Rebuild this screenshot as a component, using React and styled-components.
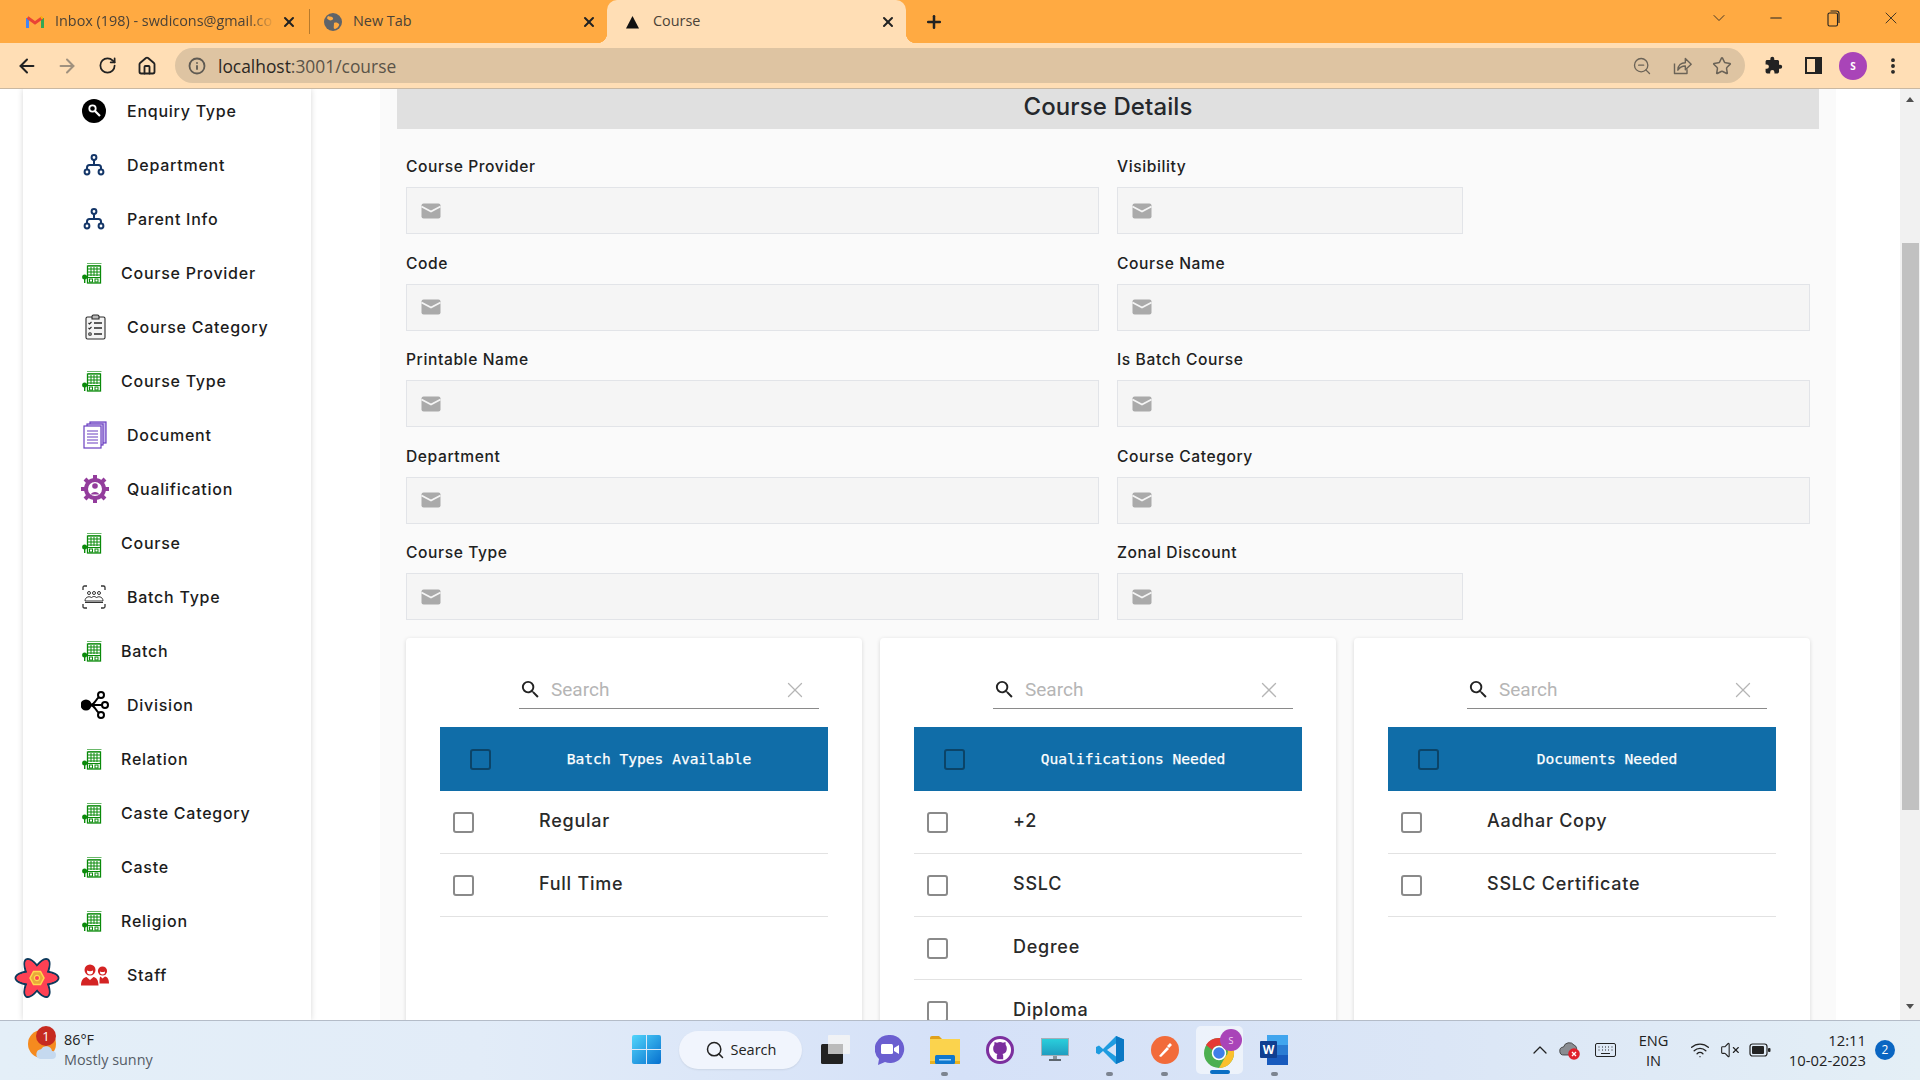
import React from 'react';
import styled, { createGlobalStyle } from 'styled-components';
import { X, ArrowLeft, ArrowRight, RotateCw, Home, Info, ZoomOut, Star, Plus, ChevronDown, ChevronUp, Minus, MoreVertical, Search, Wifi, VolumeX } from 'lucide-react';
import { MdSearch } from 'react-icons/md';

const GlobalStyle = createGlobalStyle`
  html, body { margin: 0; height: 100%; overflow: hidden; }
  body { font-family: "Inter", "Liberation Sans", sans-serif; background: #fff; }
  * { box-sizing: border-box; }
`;

const Page = styled.div`
  width: 1920px;
  height: 1080px;
  display: flex;
  flex-direction: column;
  position: relative;
  overflow: hidden;
`;

/* browser chrome */
const TabBar = styled.div`
  height: 43px;
  flex: none;
  display: flex;
  padding-left: 16px;
  background: #ffaa42;
`;
const Tab = styled.div`
  position: relative;
  width: ${p => p.$w}px;
  height: 43px;
  flex: none;
  display: flex;
  align-items: center;
  padding-left: ${p => p.$pad}px;
  padding-right: 10px;
  font: 14px "Open Sans", sans-serif;
  color: #4a4238;
  border-radius: 10px 10px 0 0;
  background: ${p => (p.$active ? '#ffdeb5' : 'transparent')};
  ${p => p.$active && `
    &::before, &::after {
      content: "";
      position: absolute;
      bottom: 0;
      width: 10px;
      height: 10px;
    }
    &::before { left: -10px; background: radial-gradient(circle at 0 0, transparent 10px, #ffdeb5 10.5px); }
    &::after { right: -10px; background: radial-gradient(circle at 100% 0, transparent 10px, #ffdeb5 10.5px); }
  `}
`;
const TabTitle = styled.span`
  flex: 1;
  margin-left: ${p => p.$gap}px;
  margin-bottom: 2px;
  white-space: nowrap;
  font-size: 14.4px;
  ${p => p.$fade && `
    -webkit-mask-image: linear-gradient(to right, #000 88%, transparent 100%);
    mask-image: linear-gradient(to right, #000 88%, transparent 100%);
  `}
`;
const TabSep = styled.div`
  width: 1px;
  height: 25px;
  margin: 9px 0 0 5px;
  background: #b77a2c;
`;
const NewTabBtn = styled.div`
  margin: 12px 0 0 18px;
  height: 20px;
  color: #222;
`;
const WinControls = styled.div`
  margin-left: auto;
  display: flex;
  align-items: flex-start;
`;
const WinBtn = styled.div`
  width: 57.5px;
  height: 36px;
  display: flex;
  align-items: center;
  justify-content: center;
  color: #222;
`;
const ToolBar = styled.div`
  height: 46px;
  flex: none;
  display: flex;
  padding: 5px 7px 0;
  background: #ffdeb5;
  border-bottom: 1px solid #c9b8a2;
`;
const ToolBtn = styled.div`
  width: 40px;
  height: 35px;
  flex: none;
  display: flex;
  align-items: center;
  justify-content: center;
  color: ${p => p.$color || '#222'};
`;
const Omnibox = styled.div`
  flex: 1;
  height: 35px;
  margin: 0 8px;
  padding: 0 13px;
  display: flex;
  align-items: center;
  border-radius: 18px;
  background: #dec4a2;
  color: #5f5a52;
`;
const Url = styled.span`
  margin-left: 12px;
  font: 17.4px "Open Sans", sans-serif;
  color: #5a5348;
  b { font-weight: 400; color: #2b2722; }
`;
const OmniTools = styled.div`
  margin-left: auto;
  display: flex;
  gap: 20px;
  color: #6b6357;
`;
const Avatar = styled.div`
  width: 28px;
  height: 28px;
  border-radius: 50%;
  background: #a944b8;
  color: #fff;
  font: 700 10px "Open Sans", sans-serif;
  display: flex;
  align-items: center;
  justify-content: center;
`;

/* page body */
const Body = styled.div`
  flex: 1;
  min-height: 0;
  display: flex;
  overflow: hidden;
`;
const Sidebar = styled.nav`
  width: 288px;
  flex: none;
  margin-left: 23px;
  background: #fff;
  box-shadow: 0 0 6px rgba(0, 0, 0, 0.16);
  overflow: hidden;
`;
const SideList = styled.div`
  margin-top: -5px;
`;
const SideItem = styled.div`
  height: 54px;
  display: flex;
  align-items: center;
  padding-left: 59px;
`;
const SideIcon = styled.div`
  width: ${p => p.$w}px;
  flex: none;
  display: flex;
  align-items: center;
`;
const SideLabel = styled.span`
  font-size: 16px;
  font-weight: 500;
  letter-spacing: 0.74px;
  color: #1c1c1c;
`;
const Main = styled.main`
  flex: none;
  width: 1456px;
  margin-left: 69px;
  padding: 0 17px;
  background: #fafafa;
  overflow: hidden;
`;
const TitleBar = styled.div`
  height: 40px;
  display: flex;
  align-items: center;
  justify-content: center;
  background: #e0e0e0;
  font-size: 24px;
  font-weight: 500;
  letter-spacing: 0.1px;
  color: #25282c;
  padding-bottom: 6px;
`;
const Form = styled.div`
  padding: 28px 9px 0;
`;
const FieldGrid = styled.div`
  display: grid;
  grid-template-columns: 693px 693px;
  column-gap: 18px;
  row-gap: 19.5px;
`;
const Label = styled.div`
  height: 20px;
  margin-bottom: 10px;
  line-height: 19px;
  font-size: 15.6px;
  font-weight: 500;
  letter-spacing: 0.6px;
  color: #212121;
`;
const InputBox = styled.div`
  width: ${p => (p.$narrow ? '346px' : '100%')};
  height: 47px;
  display: flex;
  align-items: center;
  padding-left: 14px;
  background: #f5f5f5;
  border: 1px solid #e2e4e8;
`;
const Cards = styled.div`
  margin-top: 18px;
  display: grid;
  grid-template-columns: repeat(3, 456px);
  column-gap: 18px;
`;
const Card = styled.section`
  height: 420px;
  padding: 0 34px;
  background: #fff;
  border-radius: 4px;
  box-shadow: 0 1px 4px rgba(0, 0, 0, 0.14);
`;
const SearchBar = styled.div`
  width: 300px;
  height: 38px;
  margin: 33px 0 18px 79px;
  padding: 0 11px 0 0;
  display: flex;
  align-items: center;
  border-bottom: 1px solid #8a8a8a;
`;
const SearchText = styled.span`
  flex: 1;
  margin-left: 9px;
  font: 19px "Roboto", sans-serif;
  color: #b5b5b5;
`;
const ListHeader = styled.div`
  position: relative;
  height: 64px;
  display: flex;
  align-items: center;
  justify-content: center;
  padding: 0 0 2px 50px;
  background: #106da8;
  color: #fff;
  font: 400 14.6px "DejaVu Sans Mono", monospace;
  -webkit-text-stroke: 0.25px #fff;
`;
const Check = styled.span`
  width: 21px;
  height: 21px;
  flex: none;
  border-radius: 3px;
  border: 2.5px solid ${p => (p.$dark ? '#0b4468' : '#8a8a8a')};
`;
const HeaderCheck = styled.span`
  position: absolute;
  left: 30px;
  top: 22px;
  display: flex;
`;
const ListRow = styled.div`
  height: 63px;
  display: flex;
  align-items: center;
  padding-left: 13px;
  border-bottom: 1px solid #e2e2e2;
`;
const RowText = styled.span`
  margin-left: 65px;
  padding-bottom: 3px;
  font-size: 18px;
  font-weight: 500;
  letter-spacing: 0.75px;
  color: #2a2a2a;
`;
const ScrollTrack = styled.div`
  width: 20px;
  flex: none;
  margin-left: 64px;
  position: relative;
  background: #f1f1f1;
  display: flex;
  flex-direction: column;
  align-items: center;
`;
const Arrow = styled.div`
  width: 0;
  height: 0;
  border-left: 4.5px solid transparent;
  border-right: 4.5px solid transparent;
  ${p => (p.$down ? 'border-top' : 'border-bottom')}: 5px solid #505050;
  margin-top: ${p => p.$mt}px;
`;
const Thumb = styled.div`
  width: 17px;
  height: 567px;
  margin-top: 141px;
  background: #c1c1c1;
`;
const ReactBadge = styled.div`
  position: absolute;
  left: 13px;
  top: 954px;
  width: 48px;
  height: 48px;
`;

/* windows taskbar */
const Taskbar = styled.footer`
  height: 60px;
  flex: none;
  display: flex;
  align-items: center;
  position: relative;
  padding-bottom: 2px;
  border-top: 1px solid #b4bcc8;
  background: linear-gradient(90deg, #e4eff8 0%, #e2ecf8 25%, #d5e1f8 50%, #dbe6f6 75%, #e4eff6 100%);
`;
const Weather = styled.div`
  width: 632px;
  flex: none;
  padding-left: 64px;
  font-size: 14.4px;
  line-height: 20px;
  font-family: "Open Sans", sans-serif;
  color: #222;
  position: relative;
  span { display: block; color: #555c66; }
`;
const WeatherIcon = styled.div`
  position: absolute;
  left: 24px;
  top: -4px;
`;
const SearchPill = styled.div`
  width: 123px;
  height: 38px;
  margin: 0 5px 0 18px;
  display: flex;
  align-items: center;
  justify-content: center;
  gap: 6px;
  border-radius: 19px;
  background: #f1f5fd;
  box-shadow: 0 1px 2px rgba(0, 0, 0, 0.08);
  font: 14.5px "Open Sans", sans-serif;
  color: #222;
`;
const AppIcon = styled.div`
  position: relative;
  width: 55px;
  height: 48px;
  flex: none;
  display: flex;
  align-items: center;
  justify-content: center;
  border-radius: 5px;
  ${p => p.$active && 'background: rgba(255,255,255,0.55); width: 47px; margin: 0 4px;'}
  ${p => p.$dot && `
    &::after {
      content: "";
      position: absolute;
      left: 50%;
      bottom: -2px;
      width: 7px;
      height: 4px;
      margin-left: -3.5px;
      border-radius: 2px;
      background: #7c8490;
    }
  `}
  ${p => p.$active && `
    &::after {
      content: "";
      position: absolute;
      left: 50%;
      bottom: 0;
      width: 20px;
      height: 4px;
      margin-left: -10px;
      border-radius: 2px;
      background: #0a6fc4;
    }
  `}
`;
const Tray = styled.div`
  margin-left: auto;
  display: flex;
  align-items: center;
  color: #222;
  font-family: "Open Sans", sans-serif;
`;
const TrayIcon = styled.div`
  width: ${p => p.$w}px;
  flex: none;
  display: flex;
  align-items: center;
  justify-content: center;
`;
const Lang = styled.div`
  width: 60px;
  padding-right: 3px;
  text-align: center;
  font-size: 14.6px;
  line-height: 20px;
`;
const Clock = styled.div`
  width: 80px;
  margin-left: 11px;
  text-align: right;
  font-size: 14.8px;
  line-height: 20px;
  white-space: nowrap;
`;
const NotifBadge = styled.div`
  width: 20px;
  height: 20px;
  margin: 0 25px 0 9px;
  border-radius: 50%;
  background: #0a66c2;
  color: #fff;
  font-size: 12px;
  display: flex;
  align-items: center;
  justify-content: center;
`;

/* drawn icons */
const Building = () => (
  <svg width="20" height="22" viewBox="0 0 20 22">
    <path d="M5 1.5h14.5M6 3.5h12.5" stroke="#6ab86a" strokeWidth="1" fill="none" />
    <rect x="5.5" y="4" width="13" height="17" fill="#fff" stroke="#0a8a0a" strokeWidth="1.3" />
    <path d="M9 5v9M12 5v9M15 5v9M6 7h12M6 10h12M6 13h12M5.5 15.5h13" stroke="#0a8a0a" strokeWidth="1" />
    <rect x="7.5" y="17" width="3" height="3" fill="#fff" stroke="#0a8a0a" />
    <rect x="13" y="17" width="3" height="3" fill="#fff" stroke="#0a8a0a" />
    <circle cx="2.6" cy="15" r="2.5" fill="#0a8a0a" />
    <rect x="2" y="16" width="1.4" height="5" fill="#0a8a0a" />
  </svg>
);
const Hierarchy = () => (
  <svg width="24" height="24" viewBox="0 0 24 24" fill="none" stroke="#143668" strokeWidth="2">
    <circle cx="12" cy="4.5" r="2.4" />
    <circle cx="5" cy="19" r="2.4" />
    <circle cx="19" cy="19" r="2.4" />
    <path d="M12 7v5M5 16.5v-2c0-1.5 1-2.5 2.5-2.5h9c1.5 0 2.5 1 2.5 2.5v2" />
  </svg>
);
const Enquiry = () => (
  <svg width="24" height="24" viewBox="0 0 24 24">
    <circle cx="12" cy="12" r="12" fill="#000" />
    <circle cx="10.5" cy="9.5" r="3.2" fill="#000" stroke="#fff" strokeWidth="1.8" />
    <path d="M13 12l5 5" stroke="#fff" strokeWidth="2.2" />
  </svg>
);
const Clipboard = () => (
  <svg width="25" height="26" viewBox="-3 0 25 26" fill="none" stroke="#2a2a2a" strokeWidth="1.1">
    <rect x="1" y="3" width="19" height="22" rx="1.5" fill="#f4f4f4" />
    <path d="M7 5V2.500C7 1.500 7.500 1 8.500 1h4c1 0 1.500.5 1.500 1.500V5z" fill="#bbb" />
    <path d="M3.500 9l1 1 2-2M3.500 14l1 1 2-2" />
    <circle cx="5" cy="20" r="1.3" />
    <path d="M9 9h8M9 14h8M9 20h8" strokeWidth="1.7" />
  </svg>
);
const Documents = () => (
  <svg width="25" height="28" viewBox="-1 0 25 28" fill="#fff" stroke="#6a3fc0" strokeWidth="1.2">
    <rect x="7" y="1" width="16" height="21" fill="#c9b8ee" />
    <rect x="4" y="3" width="16" height="21" fill="#e5ddf6" />
    <rect x="1" y="5" width="17" height="22" />
    <path d="M4 10h11M4 13h11M4 16h11M4 19h11M4 22h11" />
  </svg>
);
const GearFace = () => (
  <svg width="28" height="28" viewBox="0 0 28 28" style={{ marginLeft: -1 }}>
    <circle cx="14" cy="14" r="9" fill="none" stroke="#933c9c" strokeWidth="4" />
    <g stroke="#933c9c" strokeWidth="4">
      <path d="M14 0v5M14 23v5M0 14h5M23 14h5M4 4l3.500 3.500M20.500 20.500L24 24M24 4l-3.500 3.500M4 24l3.500-3.500" />
    </g>
    <circle cx="14" cy="11" r="2.8" fill="#933c9c" />
    <path d="M10 19.500c0-3.500 8-3.500 8 0z" fill="#933c9c" />
  </svg>
);
const Group = () => (
  <svg width="24" height="24" viewBox="0 0 24 24" fill="none" stroke="#333" strokeWidth="1">
    <path d="M1 5V2.500C1 1.500 1.500 1 2.500 1H5M19 1h2.500c1 0 1.500.5 1.500 1.500V5M23 19v2.500c0 1-.5 1.500-1.500 1.500H19M5 23H2.500C1.500 23 1 22.500 1 21.500V19" strokeWidth="1.3" />
    <circle cx="7" cy="8" r="1.5" />
    <circle cx="12" cy="8" r="1.5" />
    <circle cx="17" cy="8" r="1.5" />
    <path d="M3 16c0-5 6-5 6.500-3 .5-2 4.500-2 5 0 .5-2 6.500-2 6.500 3zM3 17.500h18" />
  </svg>
);
const ShareNodes = () => (
  <svg width="28" height="28" viewBox="0 0 28 28" fill="none" stroke="#000" strokeWidth="2" style={{ marginLeft: -1 }}>
    <circle cx="5" cy="14" r="4.5" fill="#000" />
    <circle cx="20" cy="4" r="3" />
    <circle cx="24" cy="14" r="3" />
    <circle cx="20" cy="24" r="3" />
    <path d="M5 14h16M9 14c5 0 5-5 9-8M9 14c5 0 5 5 9 8" />
  </svg>
);
const People = () => (
  <svg width="28" height="22" viewBox="0 0 28 22" fill="#d42323" style={{ marginLeft: -1 }}>
    <circle cx="9" cy="6" r="5.5" />
    <path d="M0 21.500c0-6 3-8 5.500-8.500L9 16l3.500-3c2.500.5 5 2.500 5 8.500z" />
    <circle cx="21.5" cy="7" r="4.6" />
    <path d="M18.500 19.500c0-4 0-6.500 1-7l2 2 2.500-2c2 .5 4 2 4 7z" />
    <path d="M6 6.500c2 1 4 1 6 0v1a3 3 0 0 1-6 0zM19 7.500c2 .8 3 .8 5 0v.6a2.500 2.500 0 0 1-5 0z" fill="#fff" />
  </svg>
);
const Mail = () => (
  <svg width="20" height="16" viewBox="0 0 20 16">
    <rect x="0.5" y="0.5" width="19" height="15" rx="2" fill="#aaa" />
    <path d="M0.500 3.500L10 8.500l9.500-5" fill="none" stroke="#f5f5f5" strokeWidth="1.8" />
  </svg>
);
const Gmail = () => (
  <svg width="18" height="14" viewBox="0 0 18 14" fill="none">
    <path d="M1.500 13V3" stroke="#4285f4" strokeWidth="3" />
    <path d="M16.500 13V3" stroke="#34a853" strokeWidth="3" />
    <path d="M1.500 2.500L9 8l7.500-5.500" stroke="#ea4335" strokeWidth="3" />
    <path d="M15 3l1.500-.8" stroke="#fbbc04" strokeWidth="3" />
  </svg>
);
const Globe = () => (
  <svg width="18" height="18" viewBox="0 0 18 18">
    <circle cx="9" cy="9" r="9" fill="#5f6368" />
    <path d="M4 3c2 1 4 0 5 2S6 8 5 7 3 6 3 5zM10 10c2-1 4 0 5 1s-2 5-4 5-1-3-1-6z" fill="#ffaa42" />
  </svg>
);
const Triangle = () => (
  <svg width="15" height="14" viewBox="0 0 15 14"><path d="M7.500 1L14 13.500H1z" fill="#111" /></svg>
);
const SidePanel = () => (
  <svg width="17" height="17" viewBox="0 0 17 17">
    <rect x="1" y="1" width="15" height="15" fill="#ffdeb5" stroke="#222" strokeWidth="2" />
    <rect x="10" y="1" width="6" height="15" fill="#222" />
  </svg>
);
const Puzzle = () => (
  <svg width="19" height="19" viewBox="0 0 24 24" fill="#222">
    <path d="M20.500 11H19V7c0-1.100-.9-2-2-2h-4V3.500a2.500 2.500 0 0 0-5 0V5H4c-1.100 0-2 .9-2 2v3.800h1.500a2.700 2.700 0 0 1 0 5.400H2V20c0 1.100.9 2 2 2h3.800v-1.500a2.700 2.700 0 0 1 5.400 0V22H17c1.100 0 2-.9 2-2v-4h1.500a2.500 2.500 0 0 0 0-5z" />
  </svg>
);
const ShareArrow = () => (
  <svg width="20" height="20" viewBox="0 0 24 24" fill="none" stroke="#6b6357" strokeWidth="1.7" strokeLinejoin="round">
    <path d="M3 9v12h15v-5" />
    <path d="M7 17c0-6 4-9 9-9V3l7 7-7 6.500V12c-4 0-7 1.500-9 5z" />
  </svg>
);
const Restore = () => (
  <svg width="13" height="17" viewBox="0 0 13 17" fill="none" stroke="#222" strokeWidth="1.1">
    <rect x="1" y="3" width="9.5" height="13" rx="1.5" />
    <path d="M3.500 1h6c1.500 0 2.500 1 2.500 2.500V13" />
  </svg>
);
const ReactLogo = () => (
  <svg width="48" height="48" viewBox="-24 -24 48 48">
    <g fill="#ff4154" stroke="#0f3a5c" strokeWidth="2">
      <ellipse rx="21.5" ry="7.5" />
      <ellipse rx="21.5" ry="7.5" transform="rotate(60)" />
      <ellipse rx="21.5" ry="7.5" transform="rotate(120)" />
    </g>
    <g fill="#ff4154">
      <ellipse rx="20.5" ry="6.5" />
      <ellipse rx="20.5" ry="6.5" transform="rotate(60)" />
      <ellipse rx="20.5" ry="6.5" transform="rotate(120)" />
    </g>
    <path d="M-7 0l3.500-6.500h7L7 0l-3.500 6.500h-7z" fill="#e8a93a" stroke="#ffd94c" strokeWidth="1.5" />
    <circle r="2.6" fill="#ff4154" stroke="#ffd94c" strokeWidth="1.2" />
  </svg>
);
const WeatherGlyph = () => (
  <svg width="32" height="36" viewBox="0 0 32 36">
    <circle cx="18" cy="18" r="14" fill="#f58a1f" />
    <path d="M16 33a5 5 0 0 1 1-9.800 6 6 0 0 1 11 1.800 4 4 0 0 1 0 8z" fill="#c5d9ef" />
    <circle cx="22" cy="10" r="10" fill="#c62a20" />
    <text x="22" y="15" textAnchor="middle" fontSize="13" fill="#fff" fontFamily="Open Sans">1</text>
  </svg>
);
const WinLogo = () => (
  <svg width="29" height="29" viewBox="0 0 29 29">
    <defs>
      <linearGradient id="wl" x1="0" y1="0" x2="1" y2="1">
        <stop offset="0" stopColor="#52d5fb" />
        <stop offset="1" stopColor="#0670cf" />
      </linearGradient>
    </defs>
    <rect width="29" height="29" rx="2" fill="url(#wl)" />
    <path d="M14.500 0v29M0 14.500h29" stroke="#dfe9f8" strokeWidth="1" />
  </svg>
);
const TaskView = () => (
  <svg width="30" height="30" viewBox="0 0 30 30">
    <rect x="1" y="9" width="22" height="20" rx="1.5" fill="#222" />
    <rect x="8" y="0" width="22" height="19" rx="1" fill="#f4f4f4" fillOpacity="0.85" />
    <rect x="8" y="9" width="15" height="10" fill="#bbb" />
  </svg>
);
const Teams = () => (
  <svg width="30" height="32" viewBox="0 0 30 32">
    <path d="M15 1a14 14 0 1 1-5 27l-7 3 1-6A14 14 0 0 1 15 1z" fill="#6b5fd0" />
    <rect x="6" y="10" width="12" height="10" rx="1.5" fill="#fff" />
    <path d="M19 14l5-3v9l-5-3z" fill="#fff" />
  </svg>
);
const Folder = () => (
  <svg width="30" height="28" viewBox="0 0 30 28">
    <path d="M0 2a2 2 0 0 1 2-2h7l3 3h-12z" fill="#e0a11b" />
    <rect y="3" width="30" height="25" fill="#fbd34d" />
    <rect y="25" width="30" height="3" fill="#eab020" />
    <rect x="5" y="19" width="20" height="9" rx="1.5" fill="#0f78cf" />
    <rect x="9" y="23" width="12" height="1.5" fill="#9dd0f5" />
  </svg>
);
const GitHubApp = () => (
  <svg width="28" height="28" viewBox="0 0 28 28">
    <circle cx="14" cy="14" r="12.5" fill="#fff" stroke="#7c2f9e" strokeWidth="3" />
    <path d="M14 6c-1 0-2 .3-3 .8L8.500 6l-.2 3C7.500 10 7.200 11 7.200 12.500c0 3.500 2 5 4.300 5.400-.5.500-.7 1-.7 2v3.300h6.400V20c0-1-.2-1.500-.7-2 2.300-.4 4.300-1.900 4.300-5.500 0-1.500-.3-2.500-1.100-3.500L19.500 6l-2.500.8C16 6.300 15 6 14 6z" fill="#7c2f9e" />
  </svg>
);
const Monitor = () => (
  <svg width="28" height="24" viewBox="0 0 28 24">
    <defs>
      <linearGradient id="mon" x1="0" y1="0" x2="0" y2="1">
        <stop offset="0" stopColor="#2ad0dc" />
        <stop offset="1" stopColor="#1f9cc0" />
      </linearGradient>
    </defs>
    <rect x="0.5" y="0.5" width="27" height="17" fill="url(#mon)" stroke="#a5aeb8" strokeWidth="1" />
    <rect x="12" y="18" width="4" height="3" fill="#8a939c" />
    <rect x="8" y="21" width="12" height="2" fill="#5d666f" />
  </svg>
);
const VSCode = () => (
  <svg width="28" height="28" viewBox="0 0 28 28">
    <path d="M20 0l8 3.500v21L20 28 7 15l-4 3.500L0 17V11l3-1.500 4 3.500z" fill="#1f9ce0" />
    <path d="M20 7.500L11 14l9 6.500z" fill="#d7e3f7" />
    <path d="M20 0l8 3.500v21L20 28z" fill="#0b78c4" />
  </svg>
);
const Postman = () => (
  <svg width="28" height="28" viewBox="0 0 28 28">
    <circle cx="14" cy="14" r="14" fill="#f26b3a" />
    <path d="M8 20l8-9 2 2-8 8zM16 10l3-3 2 2-3 3z" fill="#fff" />
  </svg>
);
const Chrome = () => (
  <svg width="44" height="46" viewBox="0 0 44 46">
    <circle cx="21" cy="26" r="15" fill="#4caf50" />
    <path d="M21 11a15 15 0 0 1 13 7.500H21a7 7 0 0 0-6.500 4.500L8 18a15 15 0 0 1 13-7z" fill="#e53935" />
    <path d="M34 18.500A15 15 0 0 1 21 41l6.500-11.500A7 7 0 0 0 27 18.500z" fill="#fbc02d" />
    <circle cx="21" cy="26" r="6.5" fill="#3f7fe8" stroke="#fff" strokeWidth="1.5" />
    <circle cx="33" cy="13" r="11" fill="#a944b8" />
    <text x="33" y="17" textAnchor="middle" fontSize="9" fill="#f5d5f5" fontFamily="Open Sans">S</text>
  </svg>
);
const Word = () => (
  <svg width="30" height="30" viewBox="0 0 30 30">
    <rect x="7" y="0" width="21" height="10" fill="#41a5ee" />
    <rect x="7" y="10" width="21" height="10" fill="#2b7cd3" />
    <rect x="7" y="20" width="21" height="10" fill="#185abd" />
    <rect x="0" y="6" width="17" height="17" rx="1" fill="#103f91" />
    <text x="8.5" y="19" textAnchor="middle" fontSize="12" fontWeight="700" fill="#fff" fontFamily="Open Sans">W</text>
  </svg>
);
const TrayCloud = () => (
  <svg width="22" height="22" viewBox="0 0 22 22">
    <path d="M5 16a4 4 0 0 1-.500-8A6 6 0 0 1 15 6a4 4 0 0 1 1 7v3z" fill="#8a8d92" stroke="#333" strokeWidth="0.8" />
    <circle cx="15" cy="15" r="5.8" fill="#e0202c" />
    <path d="M13 13l4 4M17 13l-4 4" stroke="#fff" strokeWidth="1.3" />
  </svg>
);
const KeyboardGlyph = () => (
  <svg width="21" height="14" viewBox="0 0 21 14" fill="none" stroke="#222">
    <rect x="0.5" y="0.5" width="20" height="13" rx="1.5" strokeWidth="1" />
    <path d="M3.500 4h1M7 4h1M10 4h1M13 4h1M16.500 4h1M3.500 7h1M7 7h1M10 7h1M13 7h1M16.500 7h1M6 10.500h9" strokeWidth="1" />
  </svg>
);
const Battery = () => (
  <svg width="22" height="14" viewBox="0 0 22 14">
    <rect x="1" y="1" width="17" height="12" rx="2.5" fill="none" stroke="#222" strokeWidth="1.2" />
    <rect x="3" y="3" width="12" height="8" rx="1" fill="#222" />
    <rect x="19" y="5" width="2.5" height="4" rx="1" fill="#222" />
  </svg>
);

const menu = [
  ['Enquiry Type', Enquiry, 45],
  ['Department', Hierarchy, 45],
  ['Parent Info', Hierarchy, 45],
  ['Course Provider', Building, 39],
  ['Course Category', Clipboard, 45],
  ['Course Type', Building, 39],
  ['Document', Documents, 45],
  ['Qualification', GearFace, 45],
  ['Course', Building, 39],
  ['Batch Type', Group, 45],
  ['Batch', Building, 39],
  ['Division', ShareNodes, 45],
  ['Relation', Building, 39],
  ['Caste Category', Building, 39],
  ['Caste', Building, 39],
  ['Religion', Building, 39],
  ['Staff', People, 45],
];

const fields = [
  ['Course Provider'],
  ['Visibility', true],
  ['Code'],
  ['Course Name'],
  ['Printable Name'],
  ['Is Batch Course'],
  ['Department'],
  ['Course Category'],
  ['Course Type'],
  ['Zonal Discount', true],
];

const lists = [
  ['Batch Types Available', ['Regular', 'Full Time']],
  ['Qualifications Needed', ['+2', 'SSLC', 'Degree', 'Diploma']],
  ['Documents Needed', ['Aadhar Copy', 'SSLC Certificate']],
];

const apps = [
  [TaskView],
  [Teams],
  [Folder, 'dot'],
  [GitHubApp],
  [Monitor],
  [VSCode, 'dot'],
  [Postman, 'dot'],
  [Chrome, 'active'],
  [Word, 'dot'],
];

export default function App() {
  return (
    <Page>
      <GlobalStyle />
      <TabBar>
        <Tab $w={288} $pad={10}>
          <Gmail />
          <TabTitle $gap={11} $fade>Inbox (198) - swdicons@gmail.co</TabTitle>
          <X size={16} strokeWidth={3} color="#222" style={{ flex: 'none', marginLeft: 6, marginRight: -3 }} />
        </Tab>
        <TabSep />
        <Tab $w={297} $pad={14}>
          <Globe />
          <TabTitle $gap={11}>New Tab</TabTitle>
          <X size={16} strokeWidth={3} color="#222" />
        </Tab>
        <Tab $w={299} $pad={18} $active>
          <Triangle />
          <TabTitle $gap={13}>Course</TabTitle>
          <X size={16} strokeWidth={3} color="#222" />
        </Tab>
        <NewTabBtn><Plus size={20} strokeWidth={3} /></NewTabBtn>
        <WinControls>
          <WinBtn><ChevronDown size={20} strokeWidth={1} /></WinBtn>
          <WinBtn><Minus size={18} strokeWidth={1.4} /></WinBtn>
          <WinBtn><Restore /></WinBtn>
          <WinBtn><X size={20} strokeWidth={1} /></WinBtn>
        </WinControls>
      </TabBar>
      <ToolBar>
        <ToolBtn><ArrowLeft size={22} strokeWidth={2.2} /></ToolBtn>
        <ToolBtn $color="#a0917e"><ArrowRight size={22} strokeWidth={2.2} /></ToolBtn>
        <ToolBtn><RotateCw size={19} strokeWidth={2.2} /></ToolBtn>
        <ToolBtn><Home size={20} strokeWidth={2.2} /></ToolBtn>
        <Omnibox>
          <Info size={18} strokeWidth={2.4} color="#5f5a52" />
          <Url><b>localhost</b>:3001/course</Url>
          <OmniTools>
            <ZoomOut size={20} strokeWidth={1.6} />
            <ShareArrow />
            <Star size={20} strokeWidth={1.8} />
          </OmniTools>
        </Omnibox>
        <ToolBtn><Puzzle /></ToolBtn>
        <ToolBtn><SidePanel /></ToolBtn>
        <ToolBtn><Avatar>S</Avatar></ToolBtn>
        <ToolBtn><MoreVertical size={20} strokeWidth={2.6} /></ToolBtn>
      </ToolBar>

      <Body>
        <Sidebar>
          <SideList>
            {menu.map(([label, Icon, w]) => (
              <SideItem key={label}>
                <SideIcon $w={w}><Icon /></SideIcon>
                <SideLabel>{label}</SideLabel>
              </SideItem>
            ))}
          </SideList>
        </Sidebar>
        <Main>
          <TitleBar>Course Details</TitleBar>
          <Form>
            <FieldGrid>
              {fields.map(([label, narrow]) => (
                <div key={label}>
                  <Label>{label}</Label>
                  <InputBox $narrow={narrow}><Mail /></InputBox>
                </div>
              ))}
            </FieldGrid>
            <Cards>
              {lists.map(([title, rows]) => (
                <Card key={title}>
                  <SearchBar>
                    <MdSearch size={23} color="#222" />
                    <SearchText>Search</SearchText>
                    <X size={26} strokeWidth={1.2} color="#b5b5b5" />
                  </SearchBar>
                  <ListHeader>
                    <HeaderCheck><Check $dark /></HeaderCheck>
                    {title}
                  </ListHeader>
                  {rows.map(row => (
                    <ListRow key={row}>
                      <Check />
                      <RowText>{row}</RowText>
                    </ListRow>
                  ))}
                </Card>
              ))}
            </Cards>
          </Form>
        </Main>
        <ScrollTrack>
          <Arrow $mt={8} />
          <Thumb />
          <Arrow $down $mt={194} />
        </ScrollTrack>
      </Body>

      <Taskbar>
        <Weather>
          <WeatherIcon><WeatherGlyph /></WeatherIcon>
          86°F
          <span>Mostly sunny</span>
        </Weather>
        <WinLogo />
        <SearchPill><Search size={20} strokeWidth={1.8} />Search</SearchPill>
        {apps.map(([Icon, state], i) => (
          <AppIcon key={i} $dot={state === 'dot'} $active={state === 'active'}><Icon /></AppIcon>
        ))}
        <Tray>
          <TrayIcon $w={30}><ChevronUp size={24} strokeWidth={1.3} /></TrayIcon>
          <TrayIcon $w={30}><TrayCloud /></TrayIcon>
          <TrayIcon $w={40}><KeyboardGlyph /></TrayIcon>
          <Lang>ENG<br />IN</Lang>
          <TrayIcon $w={30}><Wifi size={20} strokeWidth={1.6} /></TrayIcon>
          <TrayIcon $w={30}><VolumeX size={20} strokeWidth={1.3} /></TrayIcon>
          <TrayIcon $w={30}><Battery /></TrayIcon>
          <Clock>12:11<br />10-02-2023</Clock>
          <NotifBadge>2</NotifBadge>
        </Tray>
      </Taskbar>
      <ReactBadge><ReactLogo /></ReactBadge>
    </Page>
  );
}
